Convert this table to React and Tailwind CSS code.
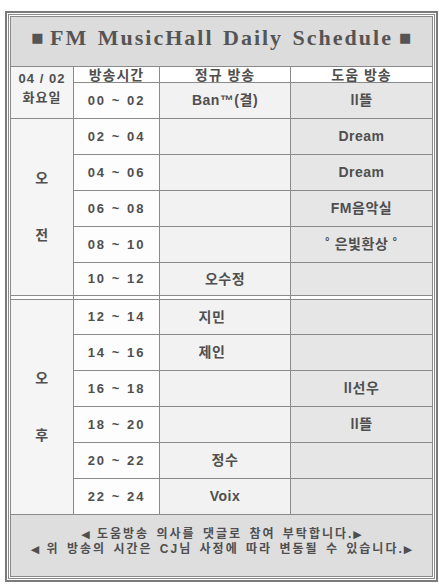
const amRows = [
  { time: '02 ~ 04', main: '', help: 'Dream' },
  { time: '04 ~ 06', main: '', help: 'Dream' },
  { time: '06 ~ 08', main: '', help: 'FM음악실' },
  { time: '08 ~ 10', main: '', help: '˚ 은빛환상 ˚' },
  { time: '10 ~ 12', main: '오수정', help: '' },
];

const pmRows = [
  { time: '12 ~ 14', main: '지민', help: '', shift: true },
  { time: '14 ~ 16', main: '제인', help: '', shift: true },
  { time: '16 ~ 18', main: '', help: 'll선우' },
  { time: '18 ~ 20', main: '', help: 'll뜰' },
  { time: '20 ~ 22', main: '정수', help: '' },
  { time: '22 ~ 24', main: 'Voix', help: '' },
];

const cols = 'grid grid-cols-[63px_86px_131px_141px]';
const line = 'border-[#8a8a8a]';

const Row = ({ row }) => (
  <>
    <div className={`flex items-center justify-center border-r border-b ${line} bg-[#fdfdfd] text-[13px] tracking-[2px]`}>
      {row.time}
    </div>
    <div className={`flex items-center justify-center border-r border-b ${line} bg-[#f2f2f2] ${row.shift ? 'pr-[26px]' : ''}`}>
      {row.main}
    </div>
    <div className={`flex items-center justify-center border-b ${line} bg-[#e6e6e6]`}>
      {row.help}
    </div>
  </>
);

const Section = ({ first, second, rows, gridRows, span }) => (
  <div className={`${cols} ${gridRows}`}>
    <div className={`${span} flex flex-col items-center justify-center gap-[38px] border-r border-b ${line} bg-[#f5f5f5] text-[14px] leading-[19px]`}>
      <span>{first}</span>
      <span>{second}</span>
    </div>
    {rows.map((r) => (
      <Row key={r.time} row={r} />
    ))}
  </div>
);

const Arrow = ({ dir }) => (
  <span className="font-['DejaVu_Sans'] text-[11px] tracking-normal">{dir === 'l' ? '◀' : '▶'}</span>
);

export default function App() {
  return (
    <div className="min-h-[586px] bg-white pt-[11px]">
      <div className="ml-[5px] w-[433px] border-2 border-[#7b7b7b] bg-white p-px">
        <div className={`border ${line} bg-white p-px`}>
          <div
            className={`border ${line} font-['Liberation_Sans','Noto_Sans_CJK_KR',sans-serif] text-[14px] font-bold tracking-[0.5px] text-[#4f4f4f]`}
          >
            {/* title */}
            <div className={`flex h-[50px] items-center justify-center gap-[6px] border-b ${line} bg-[#dcdcdc] pb-[8px] text-[#555]`}>
              <span className="font-['DejaVu_Sans'] text-[13px] leading-none">■</span>
              <span className="font-['Liberation_Serif',serif] text-[22px] tracking-[2px] [word-spacing:2px]">
                FM MusicHall Daily Schedule
              </span>
              <span className="font-['DejaVu_Sans'] text-[13px] leading-none">■</span>
            </div>

            {/* header + first slot */}
            <div className={`${cols} grid-rows-[16px_36px]`}>
              <div className={`row-span-2 flex flex-col items-center justify-center border-r border-b ${line} bg-[#f5f5f5] pb-[10px] text-[13px] leading-[19px] tracking-[1px]`}>
                <span>04 / 02</span>
                <span>화요일</span>
              </div>
              <div className={`flex items-center justify-center border-r border-b ${line} bg-white leading-none tracking-[1px]`}>방송시간</div>
              <div className={`flex items-center justify-center border-r border-b ${line} bg-white leading-none tracking-[1px]`}>정규 방송</div>
              <div className={`flex items-center justify-center border-b ${line} bg-white leading-none tracking-[1px]`}>도움 방송</div>
              <Row row={{ time: '00 ~ 02', main: 'Ban™(결)', help: 'll뜰' }} />
            </div>

            <Section first="오" second="전" rows={amRows} gridRows="grid-rows-[36px_36px_36px_36px_33px]" span="row-span-5" />

            {/* gap between morning and afternoon */}
            <div className={`${cols} h-[4px] border-b ${line} bg-white`}>
              <div className={`border-r ${line}`} />
              <div className={`border-r ${line}`} />
              <div className={`border-r ${line}`} />
              <div />
            </div>

            <Section first="오" second="후" rows={pmRows} gridRows="grid-rows-[35px_36px_36px_36px_36px_36px]" span="row-span-6" />

            {/* footer */}
            <div className="flex h-[61px] flex-col items-center justify-center bg-[#dedede] pb-[8px] text-[12px] leading-[15px] tracking-[2px] [word-spacing:2px]">
              <div>
                <Arrow dir="l" /> 도움방송 의사를 댓글로 참여 부탁합니다.<Arrow dir="r" />
              </div>
              <div>
                <Arrow dir="l" /> 위 방송의 시간은 CJ님 사정에 따라 변동될 수 있습니다.<Arrow dir="r" />
              </div>
            </div>
          </div>
        </div>
      </div>
    </div>
  );
}
